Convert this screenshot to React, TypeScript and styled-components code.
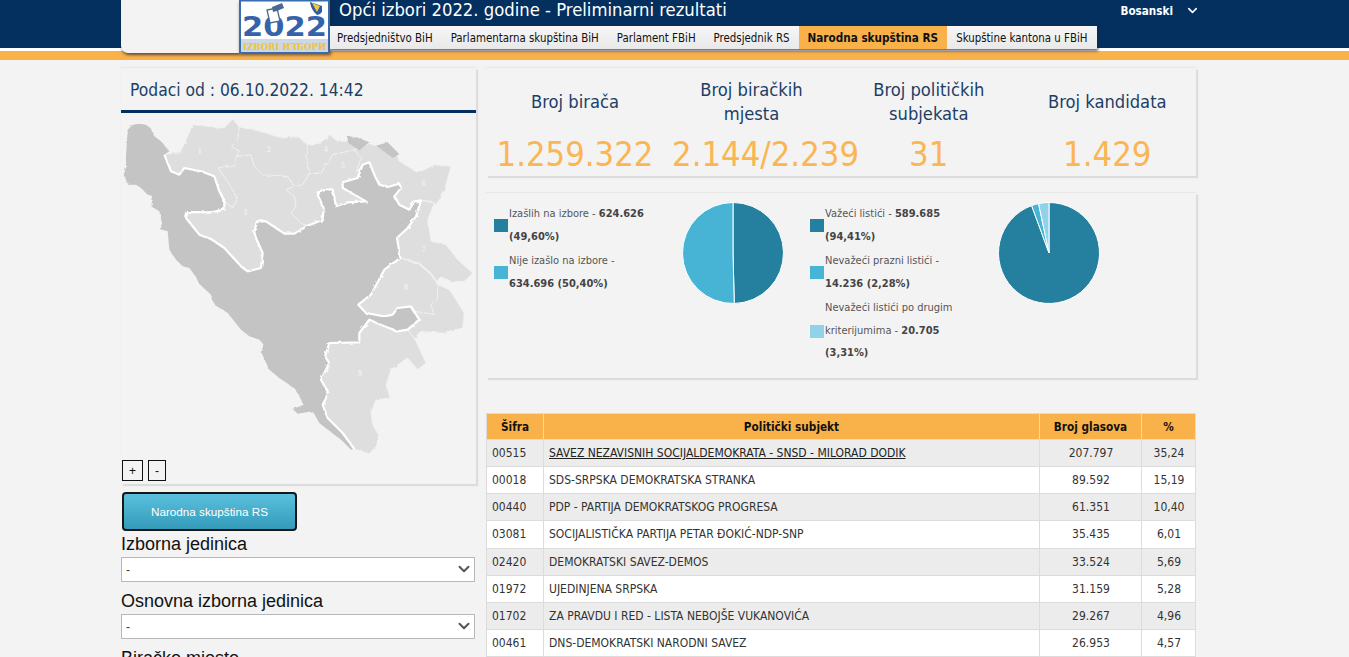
import React from 'react';
import styled, { createGlobalStyle } from 'styled-components';
import { ChevronDown } from 'lucide-react';

const tahoma = `"DejaVu Sans", Verdana, sans-serif`;
const arial = `"Liberation Sans", Arial, sans-serif`;

const navItems = ['Predsjedništvo BiH', 'Parlamentarna skupština BiH', 'Parlament FBiH', 'Predsjednik RS', 'Narodna skupština RS', 'Skupštine kantona u FBiH'];

const stats = [
  { label: 'Broj birača', value: '1.259.322' },
  { label: 'Broj biračkih mjesta', value: '2.144/2.239', wide: true },
  { label: 'Broj političkih subjekata', value: '31' },
  { label: 'Broj kandidata', value: '1.429' },
];

const rows = [
  ['00515', 'SAVEZ NEZAVISNIH SOCIJALDEMOKRATA - SNSD - MILORAD DODIK', '207.797', '35,24'],
  ['00018', 'SDS-SRPSKA DEMOKRATSKA STRANKA', '89.592', '15,19'],
  ['00440', 'PDP - PARTIJA DEMOKRATSKOG PROGRESA', '61.351', '10,40'],
  ['03081', 'SOCIJALISTIČKA PARTIJA PETAR ĐOKIĆ-NDP-SNP', '35.435', '6,01'],
  ['02420', 'DEMOKRATSKI SAVEZ-DEMOS', '33.524', '5,69'],
  ['01972', 'UJEDINJENA SRPSKA', '31.159', '5,28'],
  ['01702', 'ZA PRAVDU I RED - LISTA NEBOJŠE VUKANOVIĆA', '29.267', '4,96'],
  ['00461', 'DNS-DEMOKRATSKI NARODNI SAVEZ', '26.953', '4,57'],
];

const colors = ['#24809e', '#47b4d6', '#8fd2ea'];

// granica izmedju entiteta, koordinate su iz viewBox-a mape
const borderLine = '130,125 150,175 175,185 190,165 240,175 280,190 295,235 310,265 310,290 270,298 200,297 195,315 235,365 270,378 310,405 360,460 380,475 420,465 425,420 405,375 400,358 408,325 435,325 465,345 490,362 520,362 560,338 605,320 608,285 590,245 605,228 635,230 645,280 680,268 735,265 700,245 665,225 665,208 710,195 725,155 745,148 760,185 775,215 800,222 835,212 840,225 820,250 835,275 865,290 880,265 900,262 885,310 860,345 828,375 838,435 790,470 750,545 712,575 735,600 790,610 815,605 830,585 870,580 895,620 860,650 830,655 790,640 745,620 715,660 715,688 625,690 612,730 625,750 600,800 622,840 605,875 620,915 665,960 700,1008';
const darkCoast = '690,1010 665,985 640,965 595,930 575,895 530,902 515,888 548,875 525,830 475,795 445,770 422,720 428,695 415,680 385,670 360,650 320,600 280,575 270,545 232,510 220,485 205,465 185,460 165,440 145,410 140,355 115,348 125,340 115,295 90,280 97,250 80,245 60,225 45,215 22,215 8,185 15,165 15,130 20,50 35,35 55,32 75,35 88,45 100,70 120,85 145,115';

const lightRegions = [
  '130,125 180,115 215,35 310,45 335,18 355,42 350,80 332,100 355,115 340,160 292,165 320,205 350,258 335,285 310,265 295,235 280,190 240,175 190,165 175,185 150,175',
  '292,165 340,160 345,130 390,125 400,160 425,185 500,190 520,220 495,230 520,250 525,280 510,300 540,330 560,338 520,362 490,362 465,345 435,325 408,325 400,358 405,375 425,420 420,465 380,475 360,460 310,405 270,378 235,365 195,315 200,297 270,298 310,290 310,265 335,285 350,258 320,205',
  '355,42 420,55 480,75 530,70 560,95 555,130 565,180 545,215 520,220 500,190 425,185 400,160 390,125 345,130 355,115 332,100 350,80',
  '520,220 545,215 565,182 600,180 635,125 700,110 720,135 705,180 725,155 745,148 710,195 665,208 665,225 700,245 735,265 680,268 645,280 635,230 605,228 590,245 608,285 605,320 560,338 540,330 510,300 525,280 520,250 495,230',
  '560,95 600,90 625,65 650,85 680,85 710,105 700,110 635,125 600,180 565,182 555,130',
  '700,110 745,92 770,100 830,130 835,145 885,175 890,180 940,155 990,160 975,215 965,245 945,275 930,265 900,262 880,265 865,290 835,275 820,250 840,225 835,212 800,222 775,215 760,185 745,148 725,155 705,180 720,135',
  '900,262 940,270 920,320 930,385 975,395 1010,440 1055,480 1030,505 990,505 955,490 950,510 930,480 895,450 838,435 828,375 860,345 885,310',
  '838,435 895,455 930,485 950,515 950,555 930,575 940,605 880,595 870,580 830,585 815,605 790,610 735,600 712,575 750,545 790,470',
  '950,515 985,530 1030,600 1025,645 960,660 900,655 880,675 860,650 895,620 880,595 940,605 930,575 950,555',
  '745,620 790,640 830,655 860,650 880,675 915,750 890,770 860,735 810,770 795,815 808,855 765,860 750,900 755,935 775,970 770,995 745,1022 700,1008 665,960 620,915 605,875 622,840 600,800 625,750 612,730 625,690 715,688 715,660',
];

const mapLabels = [
  ['1', 236, 122], ['2', 443, 116], ['3', 373, 305], ['4', 614, 116], ['5', 666, 166],
  ['6', 908, 218], ['7', 908, 416], ['8', 855, 530], ['9', 717, 788],
] as const;

function slicePath(cx: number, cy: number, r: number, from: number, to: number) {
  const a0 = (from / 100) * Math.PI * 2 - Math.PI / 2;
  const a1 = (to / 100) * Math.PI * 2 - Math.PI / 2;
  const big = to - from > 50 ? 1 : 0;
  return `M${cx} ${cy} L${cx + r * Math.cos(a0)} ${cy + r * Math.sin(a0)} A${r} ${r} 0 ${big} 1 ${cx + r * Math.cos(a1)} ${cy + r * Math.sin(a1)} Z`;
}

function Pie({ values }: { values: number[] }) {
  let start = 0;
  return (
    <PieSvg viewBox="0 0 104 104">
      {values.map((v, i) => {
        const d = slicePath(52, 52, 50.5, start, start + v);
        start += v;
        return <path key={i} d={d} fill={colors[i]} stroke="#fff" strokeWidth="1" />;
      })}
    </PieSvg>
  );
}

function Logo() {
  return (
    <LogoBox>
      <svg width="91" height="53" viewBox="0 0 91 53">
        <rect x="1" y="0.5" width="89" height="52" fill="#fff" stroke="#3a6cb0" strokeWidth="2" />
        <text x="45.5" y="36" textAnchor="middle" fontFamily={tahoma} fontWeight="700" fontSize="26" fill="#3563ab" textLength="85" lengthAdjust="spacingAndGlyphs">2022</text>
        <path d="M28 10 L38 8 L41 21 L31 23 Z" fill="#fff" stroke="#4a6a94" strokeWidth="1.3" />
        <path d="M33 7 L43 3 L45 8 L38 11 L34 12 Z" fill="#4a6a94" />
        <path d="M71 2 L83 6 L83 12 Q81 15 78 15 Q72 10 71 2 Z" fill="#2d5da8" />
        <path d="M73 3 L81 6 L78 12 Z" fill="#f0c93a" />
        <rect x="2" y="39" width="87" height="13" fill="#cfd8e2" />
        <text x="45.5" y="49.5" textAnchor="middle" fontFamily={`"DejaVu Serif", serif`} fontWeight="700" fontSize="10" fill="#eec433" textLength="83" lengthAdjust="spacingAndGlyphs">IZBORI ИЗБОРИ</text>
      </svg>
    </LogoBox>
  );
}

function Dropdown() {
  return (
    <SelectWrap>
      <Select><option>-</option></Select>
      <SelectArrow><ChevronDown size={18} strokeWidth={2.6} /></SelectArrow>
    </SelectWrap>
  );
}

export default function App() {
  return (
    <Page>
      <GlobalStyle />
      <Header>
        <HeaderInner>
          <BlankBlock />
          <Logo />
          <HeaderMain>
            <TopLine>
              <Title>Opći izbori 2022. godine - Preliminarni rezultati</Title>
              <Lang>
                Bosanski <ChevronDown size={15} strokeWidth={2.5} />
              </Lang>
            </TopLine>
            <Nav>
              {navItems.map((n, i) => (
                <NavItem key={n} $active={i === 4}>{n}</NavItem>
              ))}
            </Nav>
          </HeaderMain>
        </HeaderInner>
      </Header>
      <OrangeBar />

      <Main>
        <LeftCol>
          <MapPanel>
            <DateLine>Podaci od : 06.10.2022. 14:42</DateLine>
            <MapBox>
              <MapSvg viewBox="0 0 1065 1113">
                <defs>
                  <filter id="rough" x="-2%" y="-2%" width="104%" height="104%">
                    <feTurbulence type="fractalNoise" baseFrequency="0.06" numOctaves="2" seed="3" />
                    <feDisplacementMap in="SourceGraphic" scale="9" />
                  </filter>
                </defs>
                <g filter="url(#rough)">
                  {lightRegions.map((p, i) => (
                    <polygon key={i} points={p} fill="#dedede" stroke="#f0f0f0" strokeWidth="2.5" strokeLinejoin="round" />
                  ))}
                  <polygon points={`${borderLine} ${darkCoast}`} fill="#c4c4c4" />
                  <polygon points="680,70 705,72 745,88 715,112 680,88" fill="#c4c4c4" />
                  <polygon points="765,98 800,88 835,124 815,134" fill="#c4c4c4" />
                  <polyline points={borderLine} fill="none" stroke="#fff" strokeWidth="6.5" strokeLinejoin="round" />
                </g>
                {mapLabels.map(([t, x, y]) => (
                  <text key={t} x={x} y={y} textAnchor="middle" fontFamily={`"Liberation Serif", serif`} fontWeight="700" fontSize="24" fill="#f0f0f0">{t}</text>
                ))}
              </MapSvg>
              <ZoomButtons>
                <ZoomButton>+</ZoomButton>
                <ZoomButton $narrow>-</ZoomButton>
              </ZoomButtons>
            </MapBox>
          </MapPanel>
          <ActionButton>Narodna skupština RS</ActionButton>
          <FieldLabel>Izborna jedinica</FieldLabel>
          <Dropdown />
          <FieldLabel $spaced>Osnovna izborna jedinica</FieldLabel>
          <Dropdown />
          <FieldLabel $spaced>Biračko mjesto</FieldLabel>
        </LeftCol>

        <RightCol>
          <StatsPanel>
            {stats.map((s) => (
              <Stat key={s.label}>
                <StatLabel>{s.label}</StatLabel>
                <StatValue $wide={s.wide}>{s.value}</StatValue>
              </Stat>
            ))}
          </StatsPanel>

          <ChartPanel>
            <ChartGroup>
              <Legend>
                <LegendRow>
                  <Swatch $color={colors[0]} />
                  <LegendText>Izašlih na izbore - <b>624.626 (49,60%)</b></LegendText>
                </LegendRow>
                <LegendRow>
                  <Swatch $color={colors[1]} />
                  <LegendText>Nije izašlo na izbore - <b>634.696 (50,40%)</b></LegendText>
                </LegendRow>
              </Legend>
              <Pie values={[49.6, 50.4]} />
            </ChartGroup>
            <ChartGroup>
              <Legend>
                <LegendRow>
                  <Swatch $color={colors[0]} />
                  <LegendText>Važeći listići - <b>589.685 (94,41%)</b></LegendText>
                </LegendRow>
                <LegendRow>
                  <Swatch $color={colors[1]} />
                  <LegendText>Nevažeći prazni listići - <b>14.236 (2,28%)</b></LegendText>
                </LegendRow>
                <LegendRow>
                  <Swatch $color={colors[2]} />
                  <LegendText>Nevažeći listići po drugim kriterijumima - <b>20.705 (3,31%)</b></LegendText>
                </LegendRow>
              </Legend>
              <Pie values={[94.41, 2.28, 3.31]} />
            </ChartGroup>
          </ChartPanel>

          <ResultsTable>
            <colgroup>
              <col width="57" />
              <col width="496" />
              <col width="102" />
              <col width="54" />
            </colgroup>
            <thead>
              <tr>
                <Th>Šifra</Th>
                <Th>Politički subjekt</Th>
                <Th>Broj glasova</Th>
                <Th>%</Th>
              </tr>
            </thead>
            <tbody>
              {rows.map((r, i) => (
                <Tr key={r[0]} $odd={i % 2 === 0}>
                  <Td>{r[0]}</Td>
                  <Td $underline={i === 0}>{r[1]}</Td>
                  <Td $center>{r[2]}</Td>
                  <Td $center>{r[3]}</Td>
                </Tr>
              ))}
            </tbody>
          </ResultsTable>
        </RightCol>
      </Main>
    </Page>
  );
}

const GlobalStyle = createGlobalStyle`
  html, body {
    margin: 0;
    padding: 0;
    background: #f3f3f3;
    overflow: hidden;
  }
  * { box-sizing: border-box; }
`;

const Page = styled.div`
  width: 1349px;
  height: 657px;
  overflow: hidden;
  background: #f3f3f3;
  font-family: ${tahoma};
  font-stretch: condensed;
`;

const Header = styled.header`
  height: 48px;
  background: #04305f;
  padding-left: 121px;
`;

const HeaderInner = styled.div`
  display: flex;
  width: 1076px;
  height: 53px;
  position: relative;
  z-index: 2;
`;

const BlankBlock = styled.div`
  width: 118px;
  height: 53px;
  background: #f3f3f3;
  border-radius: 0 0 0 7px;
  box-shadow: 1px 2px 3px rgba(40, 30, 50, 0.7);
`;

const LogoBox = styled.div`
  width: 91px;
  height: 53px;
  box-shadow: 1px 2px 3px rgba(40, 30, 50, 0.7);
  svg { display: block; }
`;

const HeaderMain = styled.div`
  flex: 1;
  display: flex;
  flex-direction: column;
  min-width: 0;
`;

const TopLine = styled.div`
  height: 26px;
  display: flex;
  justify-content: space-between;
  padding: 0 0 0 9px;
`;

const Title = styled.h1`
  margin: 0;
  font-size: 18.3px;
  line-height: 20px;
  font-weight: 400;
  color: #fff;
`;

const Lang = styled.div`
  display: flex;
  align-items: center;
  gap: 12px;
  height: 21px;
  margin-right: -3px;
  font-size: 11.6px;
  font-weight: 700;
  color: #fff;
`;

const Nav = styled.nav`
  display: flex;
  width: 767px;
  height: 23px;
  background: linear-gradient(#f6f6f6, #e9e9e9);
  box-shadow: 1px 2px 3px rgba(40, 30, 50, 0.7);
`;

const NavItem = styled.a<{ $active?: boolean }>`
  display: flex;
  align-items: center;
  padding: 0 9px;
  font-size: ${(p) => (p.$active ? 11.65 : 11.4)}px;
  color: #111;
  white-space: nowrap;
  font-weight: ${(p) => (p.$active ? 700 : 400)};
  background: ${(p) => (p.$active ? '#f9b24a' : 'transparent')};
  &:first-child { padding-left: 7px; }
`;

const OrangeBar = styled.div`
  height: 12px;
  border-top: 3px solid #fff;
  background: #f9b24a;
`;

const Main = styled.main`
  display: flex;
  gap: 10px;
  padding: 8px 0 0 121px;
`;

const LeftCol = styled.div`
  width: 355px;
  flex: none;
`;

const MapPanel = styled.section`
  height: 416px;
  display: flex;
  flex-direction: column;
  box-shadow: 2px 2px 1px #dcdcdc, 0 -1px 1px #e8e8e8;
`;

const DateLine = styled.div`
  height: 45px;
  padding: 11px 0 0 9px;
  border-bottom: 3px solid #04305f;
  font-size: 17.3px;
  line-height: 22px;
  color: #1c3f66;
`;

const MapBox = styled.div`
  position: relative;
  flex: 1;
`;

const MapSvg = styled.svg`
  display: block;
  width: 355px;
  height: 371px;
`;

const ZoomButtons = styled.div`
  position: absolute;
  left: 1px;
  bottom: 3px;
  display: flex;
  gap: 5px;
`;

const ZoomButton = styled.button<{ $narrow?: boolean }>`
  width: ${(p) => (p.$narrow ? 18 : 21)}px;
  height: 21px;
  padding: 0;
  border: 1px solid #111;
  background: #f3f3f3;
  font-family: ${arial};
  font-size: 12px;
  color: #111;
`;

const ActionButton = styled.button`
  display: block;
  width: 175px;
  height: 39px;
  margin: 8px 0 0 1px;
  border: 2px solid #14181b;
  border-radius: 4px;
  background: linear-gradient(#5ac0de, #339bb9);
  font-family: ${arial};
  font-size: 11.7px;
  color: #fff;
`;

const FieldLabel = styled.label<{ $spaced?: boolean }>`
  display: block;
  margin-top: ${(p) => (p.$spaced ? 8 : 2)}px;
  font-family: ${arial};
  font-size: 18px;
  line-height: 23px;
  color: #111;
`;

const SelectWrap = styled.div`
  position: relative;
  width: 354px;
  margin-top: 1px;
`;

const Select = styled.select`
  display: block;
  width: 100%;
  height: 25px;
  padding: 0 3px 0 4px;
  border: 1px solid #b8b8b8;
  border-radius: 0;
  appearance: none;
  background: #fff;
  font-family: ${arial};
  font-size: 12px;
  color: #333;
`;

const SelectArrow = styled.span`
  position: absolute;
  right: 2px;
  top: 3px;
  display: flex;
  color: #555;
`;

const RightCol = styled.div`
  width: 710px;
  flex: none;
`;

const StatsPanel = styled.section`
  display: grid;
  grid-template-columns: 178px 175px 179.5px 177.5px;
  height: 108px;
  box-shadow: 2px 2px 1px #dcdcdc, 0 -1px 1px #e8e8e8;
`;

const Stat = styled.div`
  display: flex;
  flex-direction: column;
  align-items: center;
  justify-content: flex-end;
  text-align: center;
  min-width: 0;
`;

const StatLabel = styled.div`
  width: 150px;
  flex: 1;
  display: flex;
  align-items: center;
  justify-content: center;
  padding-top: 3px;
  font-size: 18.2px;
  line-height: 24px;
  color: #1c3f66;
`;

const StatValue = styled.div<{ $wide?: boolean }>`
  height: 44px;
  font-size: 34.3px;
  line-height: 44px;
  color: #fbb552;
  white-space: nowrap;
  align-self: ${(p) => (p.$wide ? 'flex-start' : 'center')};
  padding-left: ${(p) => (p.$wide ? 8 : 0)}px;
`;

const ChartPanel = styled.section`
  display: flex;
  height: 185px;
  margin-top: 17px;
  padding: 10px 0 0 8px;
  box-shadow: 2px 2px 1px #dcdcdc, 0 -1px 1px #e8e8e8;
`;

const ChartGroup = styled.div`
  width: 316px;
  display: flex;
  align-items: flex-start;
`;

const Legend = styled.div`
  width: 187px;
  display: flex;
  flex-direction: column;
  gap: 1.6px;
`;

const LegendRow = styled.div`
  display: flex;
  align-items: center;
  gap: 1px;
`;

const Swatch = styled.span<{ $color: string }>`
  width: 14px;
  height: 13px;
  flex: none;
  background: ${(p) => p.$color};
`;

const LegendText = styled.div`
  width: 145px;
  font-size: 11px;
  line-height: 22.7px;
  color: #555;
  b { color: #444; }
`;

const PieSvg = styled.svg`
  width: 104px;
  height: 104px;
  margin: -2px 0 0 0;
  flex: none;
`;

const ResultsTable = styled.table`
  width: 709px;
  margin: 35px 0 0 0;
  border-collapse: collapse;
  table-layout: fixed;
  font-size: 12px;
  color: #333;
`;

const Th = styled.th`
  height: 26px;
  padding: 0;
  border: 1px solid #dcdcdc;
  background: #f9b24a;
  font-size: 11.7px;
  font-weight: 700;
  color: #111;
`;

const Tr = styled.tr<{ $odd?: boolean }>`
  background: ${(p) => (p.$odd ? '#ececec' : '#fff')};
`;

const Td = styled.td<{ $center?: boolean; $underline?: boolean }>`
  height: 27.14px;
  padding: 0 4px 0 5px;
  border: 1px solid #dcdcdc;
  text-align: ${(p) => (p.$center ? 'center' : 'left')};
  text-decoration: ${(p) => (p.$underline ? 'underline' : 'none')};
  color: ${(p) => (p.$underline ? '#222' : '#333')};
  white-space: nowrap;
`;
